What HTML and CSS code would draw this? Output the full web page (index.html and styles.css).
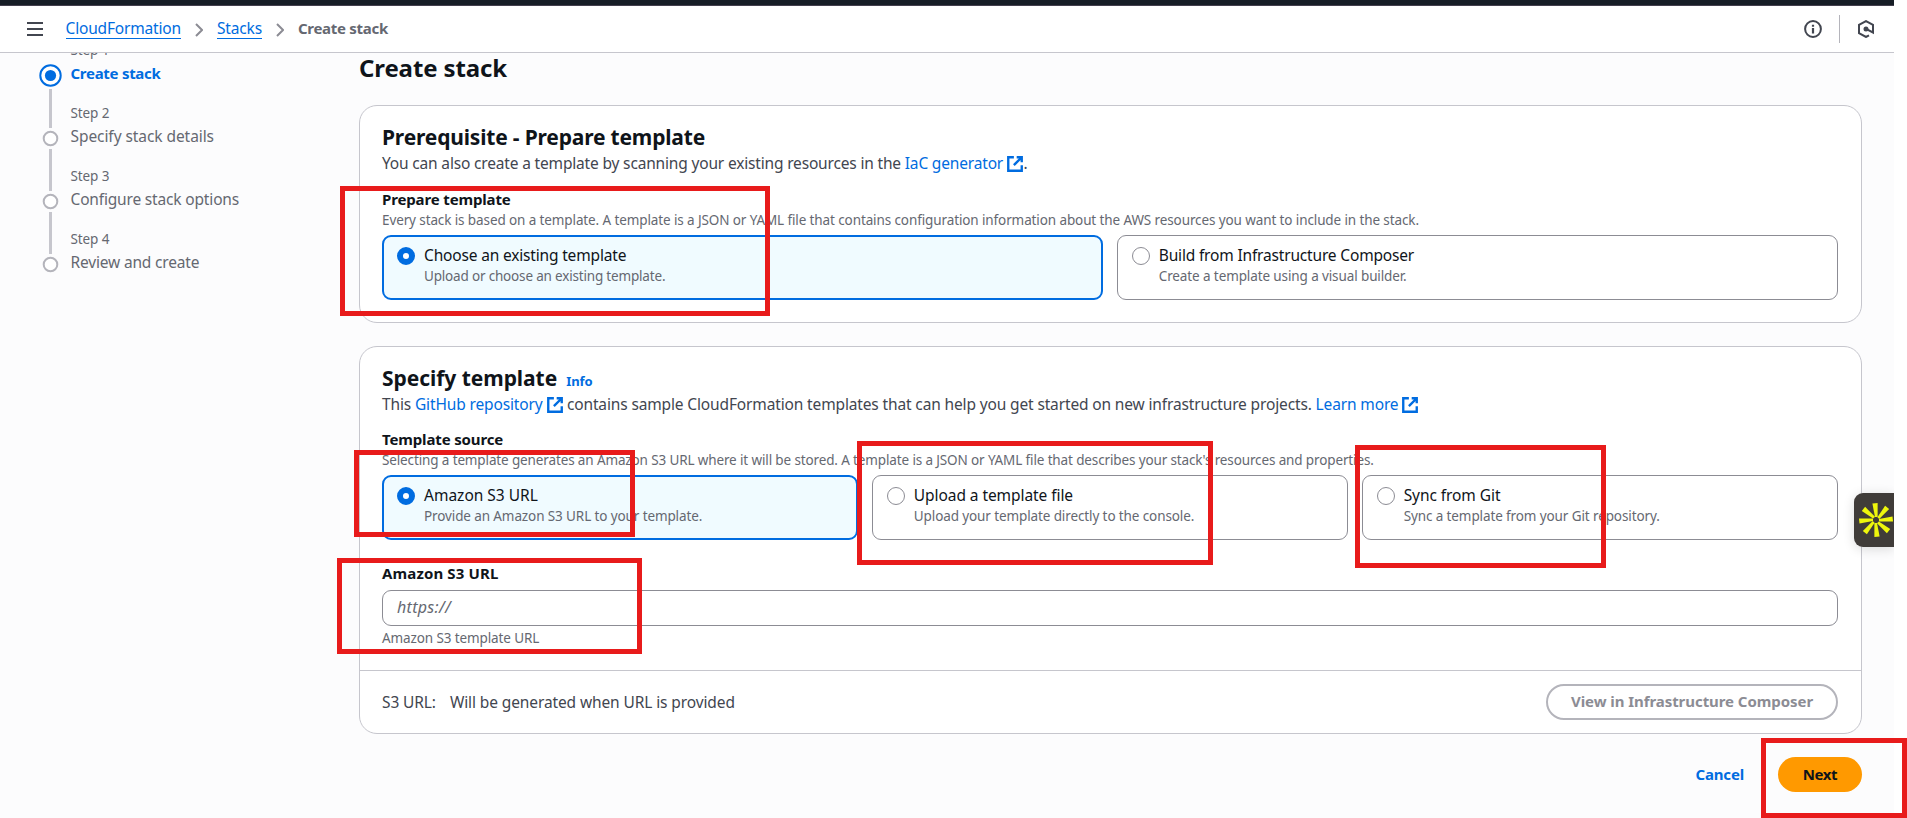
FILE: index.html
```
<!DOCTYPE html>
<html lang="en">
<head>
<meta charset="utf-8">
<title>Create stack</title>
<link rel="stylesheet" href="styles.css">
</head>
<body>
<svg class="defs" width="0" height="0">
  <symbol id="external" viewBox="0 0 16 16"><path d="M9.5 2H14v4.5M7 9l7-7M14 9v5H2V2h5" fill="none" stroke="currentColor" stroke-width="2.1"/></symbol>
  <symbol id="chevron" viewBox="0 0 8 14"><path d="M1 1l6 6-6 6" fill="none" stroke="currentColor" stroke-width="2"/></symbol>
</svg>
<div class="app">
  <div class="topbar"></div>
  <header class="header">
    <svg class="menu" width="16" height="14" viewBox="0 0 16 14"><path d="M0 1h16M0 7h16M0 13h16" stroke="#424650" stroke-width="2"/></svg>
    <nav class="crumbs">
      <a class="crumb">CloudFormation</a>
      <svg class="chev" width="8" height="14"><use href="#chevron"/></svg>
      <a class="crumb">Stacks</a>
      <svg class="chev" width="8" height="14"><use href="#chevron"/></svg>
      <span class="current">Create stack</span>
    </nav>
    <div class="tools">
      <svg width="18" height="18" viewBox="0 0 18 18"><circle cx="9" cy="9" r="7.9" fill="none" stroke="#424650" stroke-width="2"/><path d="M9 4.7v2M9 8v5.6" stroke="#424650" stroke-width="2.2"/></svg>
      <span class="rule"></span>
      <svg width="18" height="18" viewBox="0 0 18 18"><path d="M12 15.4L9 17 2 13.2V4.9L9 1.1l7 3.8v7.6L9.5 9.2" fill="none" stroke="#424650" stroke-width="2"/><circle cx="9" cy="9" r="2.5" fill="#424650"/></svg>
    </div>
  </header>

  <div class="main">
    <aside class="steps">
      <div class="step active">
        <svg class="marker" width="24" height="63"><circle cx="11.5" cy="36.5" r="10.2" fill="#fff" stroke="#006ce0" stroke-width="2"/><circle cx="11.5" cy="36.5" r="5.6" fill="#006ce0"/><path d="M11.5 50v13" stroke="#c6c6cd" stroke-width="3"/></svg>
        <div><div class="num">Step 1</div><div class="name">Create stack</div></div>
      </div>
      <div class="step">
        <svg class="marker" width="24" height="63"><path d="M11.5 0v26M11.5 47v16" stroke="#c6c6cd" stroke-width="3"/><circle cx="11.5" cy="36.5" r="6.8" fill="#fff" stroke="#b4b4bb" stroke-width="2"/></svg>
        <div><div class="num">Step 2</div><div class="name wide">Specify stack details</div></div>
      </div>
      <div class="step">
        <svg class="marker" width="24" height="63"><path d="M11.5 0v26M11.5 47v16" stroke="#c6c6cd" stroke-width="3"/><circle cx="11.5" cy="36.5" r="6.8" fill="#fff" stroke="#b4b4bb" stroke-width="2"/></svg>
        <div><div class="num">Step 3</div><div class="name">Configure stack options</div></div>
      </div>
      <div class="step">
        <svg class="marker" width="24" height="63"><path d="M11.5 0v26" stroke="#c6c6cd" stroke-width="3"/><circle cx="11.5" cy="36.5" r="6.8" fill="#fff" stroke="#b4b4bb" stroke-width="2"/></svg>
        <div><div class="num">Step 4</div><div class="name">Review and create</div></div>
      </div>
    </aside>

    <main class="content">
      <h1 class="title">Create stack</h1>

      <section class="card">
        <div class="card-body">
          <h2 class="heading prereq">Prerequisite - Prepare template</h2>
          <p class="desc">You can also create a template by scanning your existing resources in the <a class="link">IaC generator<svg class="ext" width="18" height="18"><use href="#external"/></svg></a>.</p>
          <div class="label">Prepare template</div>
          <div class="hint">Every stack is based on a template. A template is a JSON or YAML file that contains configuration information about the AWS resources you want to include in the stack.</div>
          <div class="tiles two">
            <div class="tile selected"><span class="radio on"></span><div><div class="tile-name">Choose an existing template</div><div class="tile-desc tight">Upload or choose an existing template.</div></div></div>
            <div class="tile"><span class="radio"></span><div><div class="tile-name">Build from Infrastructure Composer</div><div class="tile-desc">Create a template using a visual builder.</div></div></div>
          </div>
        </div>
      </section>

      <section class="card">
        <div class="card-body">
          <h2 class="heading">Specify template<a class="info">Info</a></h2>
          <p class="desc sample">This <a class="link">GitHub repository<svg class="ext" width="18" height="18"><use href="#external"/></svg></a> contains sample CloudFormation templates that can help you get started on new infrastructure projects. <a class="link">Learn more<svg class="ext" width="18" height="18"><use href="#external"/></svg></a></p>
          <div class="label">Template source</div>
          <div class="hint source-hint">Selecting a template generates an Amazon S3 URL where it will be stored. A template is a JSON or YAML file that describes your stack's resources and properties.</div>
          <div class="tiles three">
            <div class="tile selected"><span class="radio on"></span><div><div class="tile-name s3">Amazon S3 URL</div><div class="tile-desc">Provide an Amazon S3 URL to your template.</div></div></div>
            <div class="tile"><span class="radio"></span><div><div class="tile-name wide">Upload a template file</div><div class="tile-desc">Upload your template directly to the console.</div></div></div>
            <div class="tile"><span class="radio"></span><div><div class="tile-name wide">Sync from Git</div><div class="tile-desc">Sync a template from your Git repository.</div></div></div>
          </div>
          <div class="label url-label">Amazon S3 URL</div>
          <div class="input">https://</div>
          <div class="hint">Amazon S3 template URL</div>
        </div>
        <div class="card-foot">
          <span class="foot-key">S3 URL:</span><span>Will be generated when URL is provided</span>
          <button class="btn outline">View in Infrastructure Composer</button>
        </div>
      </section>

      <div class="actions">
        <button class="btn text">Cancel</button>
        <button class="btn primary">Next</button>
      </div>
    </main>
  </div>

  <div class="widget">
    <svg width="36" height="36" viewBox="-18 -18 36 36" fill="#eef60c">
      <g id="rays">
        <path id="ray" d="M-1-3L-3.6-16.5L1.6-17L1.6-3z"/>
        <use href="#ray" transform="rotate(45)"/><use href="#ray" transform="rotate(90)"/><use href="#ray" transform="rotate(135)"/>
        <use href="#ray" transform="rotate(180)"/><use href="#ray" transform="rotate(225)"/><use href="#ray" transform="rotate(270)"/><use href="#ray" transform="rotate(315)"/>
      </g>
    </svg>
  </div>
</div>

<div class="mark mark-prepare"></div>
<div class="mark mark-s3"></div>
<div class="mark mark-upload"></div>
<div class="mark mark-sync"></div>
<div class="mark mark-url"></div>
<div class="mark mark-next"></div>
</body>
</html>
```
FILE: styles.css
```
* { box-sizing: border-box; }
body {
  margin: 0;
  height: 818px;
  overflow: hidden;
  position: relative;
  background: #fff;
  color: #0f141a;
  font-family: "Noto Sans", "Open Sans", sans-serif;
  font-size: 15.5px;
  letter-spacing: -0.17px;
}
.defs { position: absolute; }
.app { position: relative; width: 1894px; height: 818px; overflow: hidden; background: #fcfcfd; }
.topbar { height: 6px; background: #161d26; border-bottom: 1px solid #433f4d; }

.header {
  display: flex;
  align-items: center;
  height: 47px;
  padding: 0 19px 0 27px;
  background: #fff;
  border-bottom: 1px solid #c6c6cd;
}
.crumbs { display: flex; align-items: center; margin-left: 22.5px; }
.crumb { color: #006ce0; line-height: 18px; border-bottom: 1px solid #006ce0; padding-bottom: 1px; }
.chev { color: #8c8c94; margin: 0 14px; }
.crumb + .chev { margin-top: 1px; }
.current { color: #656871; font-weight: 700; font-size: 15px; letter-spacing: -0.28px; line-height: 19px; padding-bottom: 2px; }
.tools { display: flex; align-items: center; margin-left: auto; }
.rule { width: 1px; height: 28px; background: #b4b4bb; margin: 0 17px; }

.main { display: flex; height: 765px; overflow: hidden; }
.steps { width: 359px; padding-left: 39px; margin-top: -14px; color: #656871; }
.step { display: flex; gap: 7.5px; height: 63px; }
.num { font-size: 13.5px; letter-spacing: -0.11px; line-height: 22px; }
.name { line-height: 25px; }
.wide { letter-spacing: -0.07px; }
.active .name { color: #006ce0; font-weight: 700; font-size: 15px; letter-spacing: -0.28px; }

.content { width: 1503px; }
.title { margin: 0 0 22px; font-size: 24px; line-height: 30px; letter-spacing: -0.12px; font-weight: 700; }
.card { margin-bottom: 23px; background: #fff; border: 1px solid #c6c6cd; border-radius: 18px; }
.card-body { padding: 17px 23px 22px 22px; }
.heading { margin: 0; height: 28px; font-size: 21px; line-height: 28px; letter-spacing: -0.05px; font-weight: 700; }
.prereq { letter-spacing: -0.18px; }
.info { margin-left: 9px; color: #006ce0; font-size: 13px; }
.desc { margin: 0; height: 24px; line-height: 24px; color: #424650; white-space: nowrap; }
.sample { letter-spacing: -0.14px; }
.link { color: #006ce0; }
.ext { margin-left: 3px; margin-right: -0.5px; vertical-align: -4px; }
.label { margin-top: 13.5px; font-size: 15px; line-height: 21px; font-weight: 700; letter-spacing: -0.14px; }
.hint, .tile-desc { font-size: 13.5px; letter-spacing: -0.11px; color: #656871; white-space: nowrap; }
.hint { line-height: 20px; }
.source-hint { letter-spacing: -0.13px; }
.tiles { display: grid; gap: 13.5px; margin-top: 5px; }
.two { grid-template-columns: 1fr 1fr; }
.three { grid-template-columns: 1fr 1fr 1fr; }
.tile { display: flex; gap: 9px; height: 65px; padding: 8px 14px; border: 1px solid #8c8c94; border-radius: 9px; }
.tile.selected { padding: 7px 13px; border: 2px solid #006ce0; background: #f0fbff; }
.radio { width: 18px; height: 18px; margin-top: 3px; border: 1px solid #8c8c94; border-radius: 50%; background: #fff; }
.radio.on { border: 6px solid #006ce0; }
.tile-name { line-height: 22px; }
.s3 { letter-spacing: 0; }
.tile-desc { line-height: 20px; }
.tile-desc.tight { letter-spacing: -0.18px; }
.url-label { margin-top: 22.5px; letter-spacing: 0.13px; }
.input {
  height: 36px;
  margin: 6px 0 2px;
  padding: 0 14px;
  line-height: 33px;
  border: 1px solid #8c8c94;
  border-radius: 9px;
  font-size: 16px;
  letter-spacing: 0.3px;
  font-style: italic;
  color: #656871;
}
.card-foot { display: flex; align-items: center; height: 63px; padding: 0 23px 0 22px; border-top: 1px solid #c6c6cd; color: #424650; letter-spacing: -0.11px; }
.foot-key { margin-right: 14px; }
.btn { font-family: inherit; font-size: 15px; font-weight: 700; letter-spacing: -0.06px; padding: 0 0 1px; border: 0; background: none; }
.outline { width: 292px; height: 36px; margin-left: auto; border: 2px solid #b4b4bb; border-radius: 18px; color: #8c8c94; }
.actions { display: flex; justify-content: flex-end; gap: 34px; }
.text { color: #006ce0; letter-spacing: -0.17px; }
.primary { width: 84px; height: 35px; border-radius: 18px; background: #ff9900; color: #0f141a; letter-spacing: -0.4px; }

.widget {
  position: absolute;
  left: 1854px;
  top: 493px;
  width: 40px;
  height: 54px;
  padding: 9px 0 0 4px;
  border-radius: 9px 0 0 9px;
  background: #403c39;
  box-shadow: 0 2px 12px rgba(0, 0, 0, 0.14);
}

.mark { position: absolute; border: 5px solid #e81b1b; }
.mark-prepare { left: 340px; top: 186px; width: 430px; height: 130px; }
.mark-s3 { left: 354px; top: 450px; width: 281px; height: 87px; }
.mark-upload { left: 857px; top: 441px; width: 356px; height: 124px; }
.mark-sync { left: 1355px; top: 445px; width: 251px; height: 123px; }
.mark-url { left: 337px; top: 558px; width: 305px; height: 96px; }
.mark-next { left: 1761px; top: 738px; width: 146px; height: 80px; }
```
